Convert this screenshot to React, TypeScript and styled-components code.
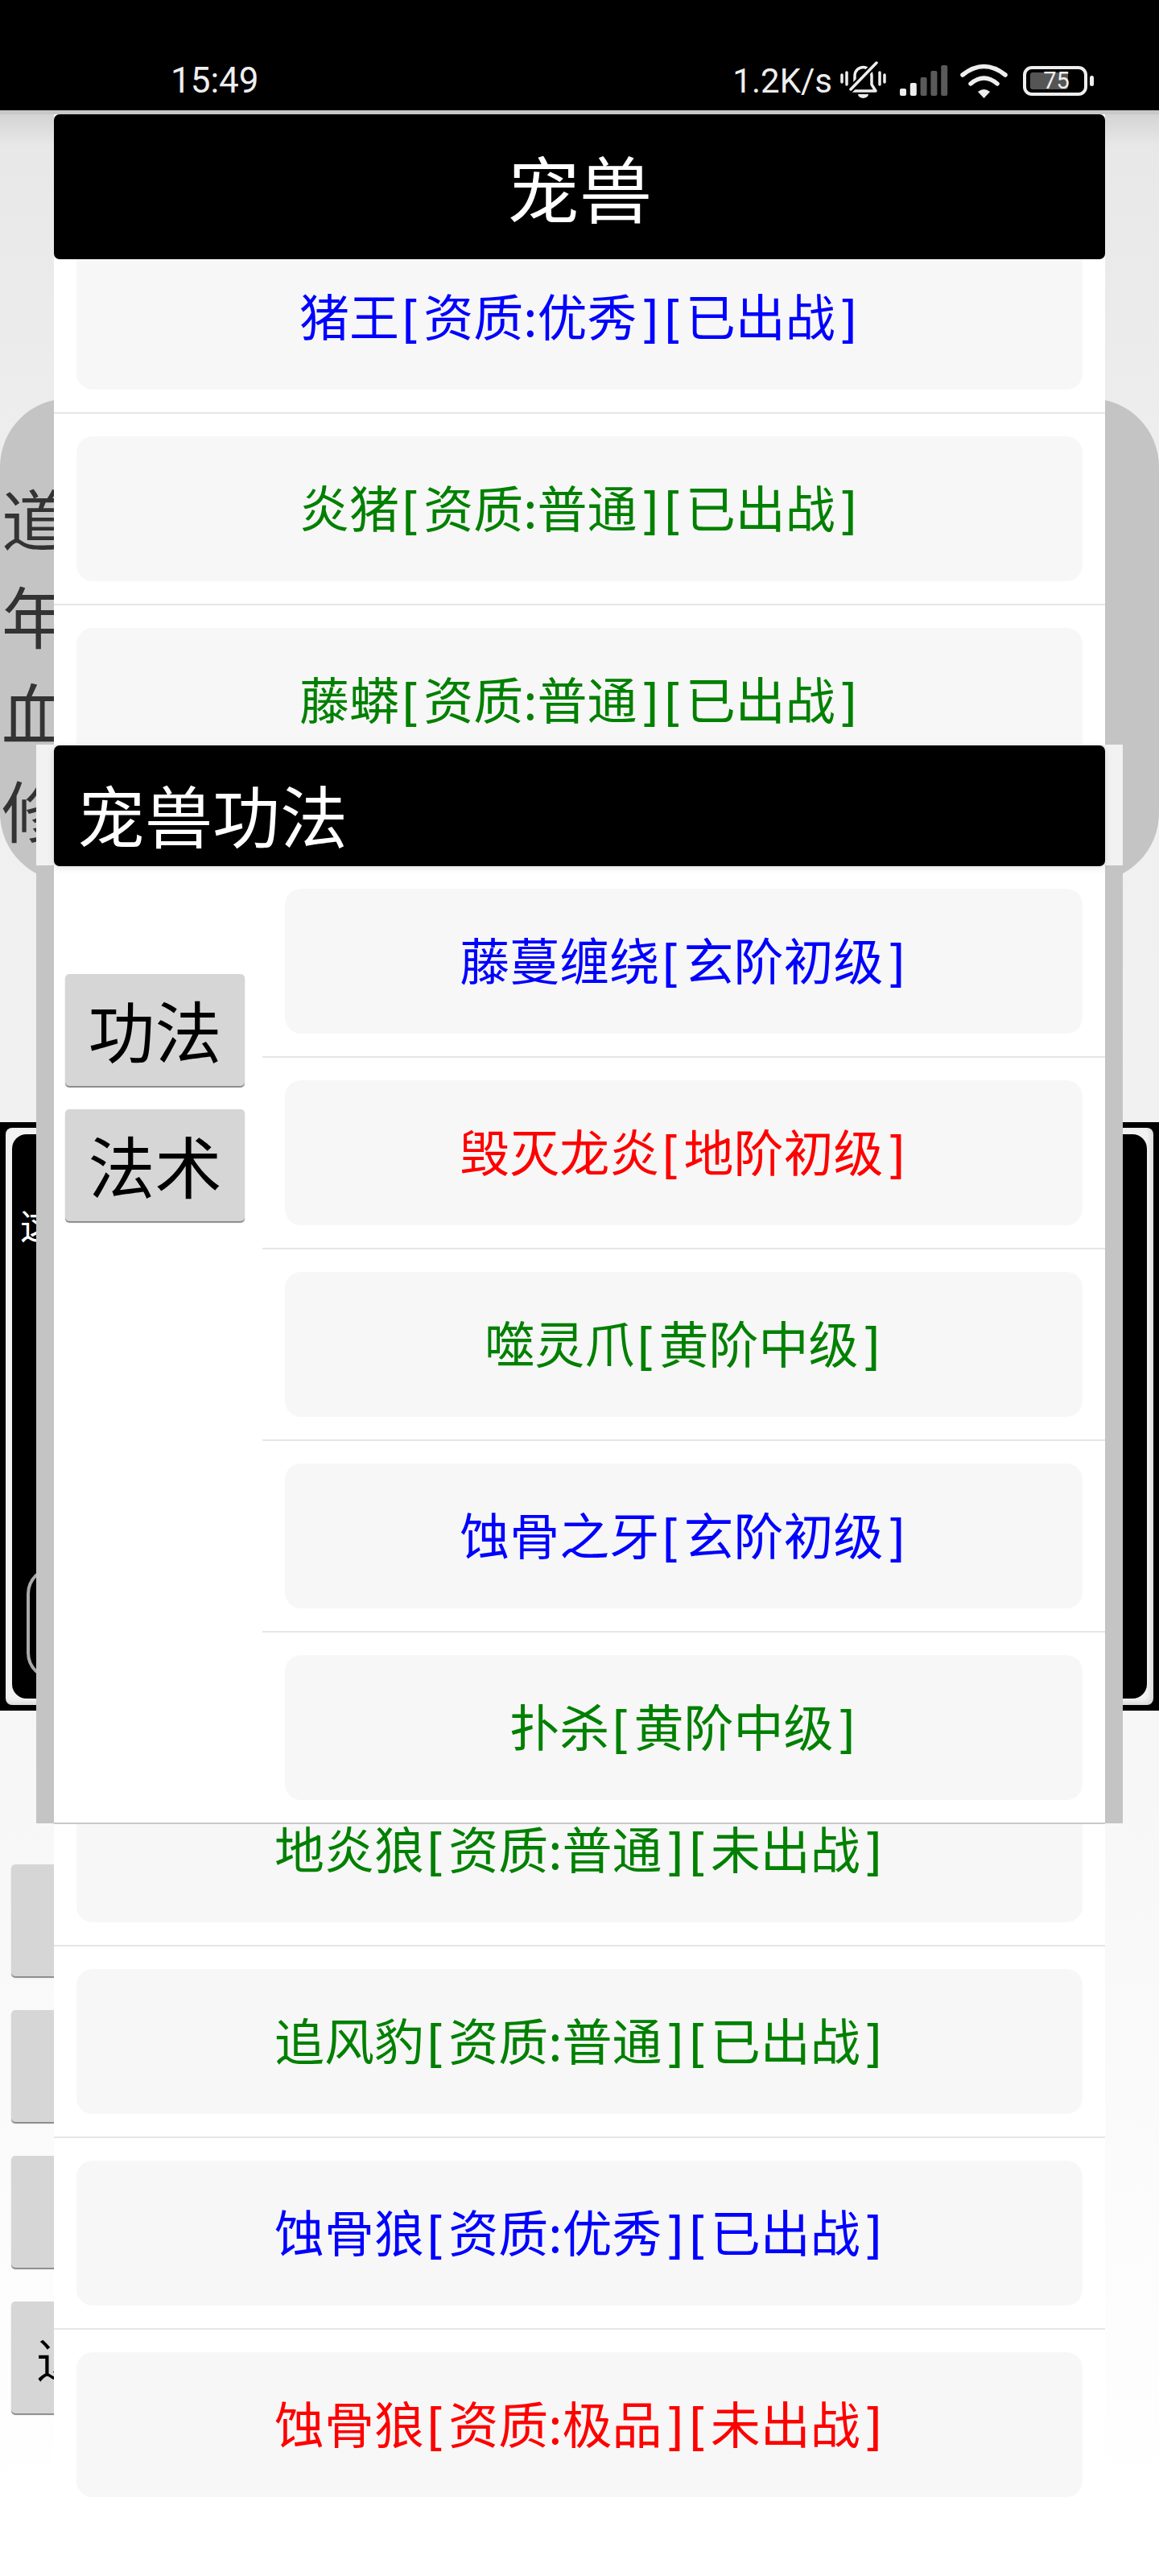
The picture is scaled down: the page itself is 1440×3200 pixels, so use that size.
import styled, { createGlobalStyle } from "styled-components";

type Grade = "blue" | "green" | "red" | "none";

const gradeColor: Record<Grade, string> = {
  blue: "#0000ff",
  green: "#008000",
  red: "#ff0000",
  none: "transparent"
};

const pets: { name: string; grade: Grade }[] = [
  { name: "猪王[资质:优秀][已出战]", grade: "blue" },
  { name: "炎猪[资质:普通][已出战]", grade: "green" },
  { name: "藤蟒[资质:普通][已出战]", grade: "green" },
  // these five sit behind the skill dialog
  { name: "", grade: "none" },
  { name: "", grade: "none" },
  { name: "", grade: "none" },
  { name: "", grade: "none" },
  { name: "", grade: "none" },
  { name: "地炎狼[资质:普通][未出战]", grade: "green" },
  { name: "追风豹[资质:普通][已出战]", grade: "green" },
  { name: "蚀骨狼[资质:优秀][已出战]", grade: "blue" },
  { name: "蚀骨狼[资质:极品][未出战]", grade: "red" }
];

const skills: { name: string; grade: Grade }[] = [
  { name: "藤蔓缠绕[玄阶初级]", grade: "blue" },
  { name: "毁灭龙炎[地阶初级]", grade: "red" },
  { name: "噬灵爪[黄阶中级]", grade: "green" },
  { name: "蚀骨之牙[玄阶初级]", grade: "blue" },
  { name: "扑杀[黄阶中级]", grade: "green" }
];

const GlobalStyle = createGlobalStyle`
  html, body { margin: 0; padding: 0; background: #fff; }
  * { box-sizing: border-box; }
  body { font-family: "Noto Sans CJK SC", sans-serif; }
`;

const Screen = styled.div`
  position: relative;
  width: 1440px;
  height: 3200px;
  overflow: hidden;
  background: #fff;
`;

const StatusBar = styled.div`
  height: 137px;
  background: #000;
  color: #eee;
  display: flex;
  align-items: center;
  justify-content: space-between;
  padding: 63px 89px 0 212px;
  font-family: Roboto, sans-serif;
  font-size: 42px;
`;

const Clock = styled.span`
  font-size: 44px;
`;

const StatusRight = styled.div`
  display: flex;
  align-items: center;
`;

const Speed = styled.span`
  margin-right: 10px;
`;

const Bell = styled.svg`
  margin-right: 17px;
  margin-top: -2px;
`;

const Wifi = styled.svg`
  margin: 0 19px 0 15px;
`;

const Battery = styled.div`
  position: relative;
  width: 80px;
  height: 37px;
  border: 4px solid #eee;
  border-radius: 11px;
  display: flex;
  align-items: center;
  justify-content: center;
  padding-left: 3px;
  font-size: 29px;
  line-height: 1;

  &::before {
    content: "";
    position: absolute;
    left: 5px;
    top: 4px;
    bottom: 4px;
    width: 47px;
    border-radius: 3px;
    background: #555;
  }

  &::after {
    content: "";
    position: absolute;
    right: -12px;
    top: 8px;
    width: 5px;
    height: 13px;
    border-radius: 3px;
    background: #eee;
  }

  span { position: relative; }
`;

const ShadowLine = styled.div`
  height: 5px;
  background: #c8c8c8;
`;

const Page = styled.div`
  height: 3058px;
  background: linear-gradient(to bottom, #d4d4d4 0, #e8e8e8 40px, #efefef 500px, #f1f1f1 1200px, #f8f8f8 2200px, #fff 3000px);
  padding-top: 353px;
`;

const StatsPanel = styled.div`
  height: 600px;
  border-radius: 85px;
  background: #c4c4c4;
  padding: 87px 0 0 2px;
  color: #333;
  font-size: 83px;
  line-height: 120.500px;
`;

const LogPanel = styled.div`
  margin-top: 299px;
  height: 731px;
  background: #000;
  padding: 7px;
`;

const LogFrame = styled.div`
  height: 100%;
  border-radius: 8px;
  background: #f2f2f2;
  padding: 8px;
  box-shadow: inset -3px -3px 6px rgba(0, 0, 0, 0.12);
`;

const LogInner = styled.div`
  height: 100%;
  border-radius: 18px;
  background: #000;
  display: flex;
  flex-direction: column;
  padding: 0 18px 23px;
`;

const LogText = styled.div`
  margin: 86px 0 0 -8px;
  color: #fff;
  font-size: 44px;
  line-height: 1.2;
`;

const LogInput = styled.div`
  margin-top: auto;
  height: 141px;
  width: 1300px;
  border: 4px solid #aaa;
  border-radius: 34px;
`;

const MenuColumn = styled.div`
  margin: 191px 0 0 14px;
  display: flex;
  flex-direction: column;
  gap: 42px;
`;

const MenuButton = styled.div`
  width: 302px;
  height: 139px;
  border-radius: 5px;
  background: #d6d6d6;
  box-shadow: 0 2px 1px #8a8a8a;
  display: flex;
  align-items: center;
  justify-content: center;
  color: #000;
  font-size: 60px;
`;

const PetDialog = styled.div`
  position: absolute;
  left: 67px;
  top: 142px;
  width: 1306px;
  bottom: 0;
  background: #fff;
  display: flex;
  flex-direction: column;
`;

const PetTitle = styled.div`
  position: relative;
  z-index: 1;
  flex: none;
  height: 180px;
  border-radius: 7px;
  background: #000;
  color: #fff;
  font-size: 90px;
  line-height: 1;
  padding-bottom: 2px;
  display: flex;
  align-items: center;
  justify-content: center;
`;

const PetList = styled.div`
  flex: 1;
  overflow: hidden;
  margin-top: -46px;
`;

const Row = styled.div<{ $last?: boolean }>`
  padding: 28px;
  border-bottom: ${(p) => (p.$last ? "none" : "2px solid #e6e6e6")};
`;

const RowCard = styled.div<{ $grade: Grade }>`
  height: 180px;
  border-radius: 20px;
  background: #f7f7f7;
  display: flex;
  align-items: center;
  justify-content: center;
  font-size: 62px;
  line-height: 1;
  white-space: pre;
  color: ${(p) => gradeColor[p.$grade]};
`;

const Bracket = styled.span`
  display: inline-block;
  padding: 0 3px;
  font-family: "DejaVu Sans", sans-serif;
`;

const SkillDialog = styled.div`
  position: absolute;
  left: 45px;
  top: 925px;
  width: 1350px;
  height: 1340px;
  background: #c4c4c4;
  display: flex;
  flex-direction: column;
`;

const SkillTitleStrip = styled.div`
  flex: none;
  height: 150px;
  background: #f2f2f2;
  padding: 1px 22px 0;
`;

const SkillTitle = styled.div`
  height: 150px;
  border-radius: 7px;
  background: #000;
  box-shadow: 0 2px 8px rgba(0, 0, 0, 0.12);
  color: #fff;
  font-size: 84px;
  line-height: 1;
  display: flex;
  align-items: center;
  padding: 20px 0 0 29px;
  position: relative;
`;

const SkillBody = styled.div`
  flex: 1;
  margin: 0 22px;
  background: #fff;
  display: flex;
  border-bottom: 2px solid #c8c8c8;
`;

const SkillTabs = styled.div`
  flex: none;
  width: 259px;
  padding: 135px 0 0 14px;
  display: flex;
  flex-direction: column;
  gap: 29px;
`;

const TabButton = styled.div`
  width: 223px;
  height: 139px;
  border-radius: 5px;
  background: #d6d6d6;
  box-shadow: 0 2px 1px #8a8a8a;
  display: flex;
  align-items: center;
  justify-content: center;
  color: #000;
  font-size: 83px;
  line-height: 1;
  padding-bottom: 3px;
`;

const SkillList = styled.div`
  flex: 1;
  overflow: hidden;
  padding-top: 1px;
`;

function Label({ text }: { text: string }) {
  return (
    <span>
      {text.split(/([\[\]])/).map((part, k) =>
        part === "[" || part === "]" ? <Bracket key={k}>{part}</Bracket> : part
      )}
    </span>
  );
}

function BellOff() {
  return (
    <Bell width="57" height="46" viewBox="0 0 57 46" fill="none" stroke="#eee" strokeWidth="3.500" strokeLinecap="round" strokeLinejoin="round">
      <path d="M2 17v9M8 14v15M49 14v15M55 17v9" />
      <path d="M13 37h31l-5-8V18a10.500 10.500 0 0 0-21 0v11z" />
      <path d="M11 37L46 1" stroke="#000" strokeWidth="8" />
      <path d="M13 35L45 2" />
      <path d="M22 41h13a6.500 5 0 0 1-13 0z" fill="#eee" stroke="none" />
    </Bell>
  );
}

function SignalBars() {
  const heights = [9, 16, 23, 31, 38];
  return (
    <svg width="60" height="38" viewBox="0 0 60 38">
      {heights.map((h, k) => (
        <rect key={k} x={k * 12.8} y={38 - h} width="8" height={h} rx="2" fill={k < 2 ? "#eee" : "#5a5a5a"} />
      ))}
    </svg>
  );
}

function WifiIcon() {
  return (
    <Wifi width="59" height="43" viewBox="0 0 59 43" fill="none" stroke="#eee" strokeWidth="5.500" strokeLinecap="round">
      <path d="M3 14Q29.500 -7 56 14" />
      <path d="M13 25Q29.500 11 46 25" />
      <path d="M22 35L29.500 43L37 35Q29.500 29 22 35Z" fill="#eee" stroke="none" />
    </Wifi>
  );
}

export default function App() {
  return (
    <Screen>
      <GlobalStyle />
      <StatusBar>
        <Clock>15:49</Clock>
        <StatusRight>
          <Speed>1.2K/s</Speed>
          <BellOff />
          <SignalBars />
          <WifiIcon />
          <Battery><span>75</span></Battery>
        </StatusRight>
      </StatusBar>
      <ShadowLine />
      <Page>
        <StatsPanel>
          <div>道号</div>
          <div>年龄</div>
          <div>血量</div>
          <div>修为</div>
        </StatsPanel>
        <LogPanel>
          <LogFrame>
            <LogInner>
              <LogText>这</LogText>
              <LogInput />
            </LogInner>
          </LogFrame>
        </LogPanel>
        <MenuColumn>
          <MenuButton />
          <MenuButton />
          <MenuButton />
          <MenuButton>退出游戏</MenuButton>
        </MenuColumn>
      </Page>

      <PetDialog>
        <PetTitle>宠兽</PetTitle>
        <PetList>
          {pets.map((pet, k) => (
            <Row key={k} $last={k === pets.length - 1}>
              <RowCard $grade={pet.grade}><Label text={pet.name} /></RowCard>
            </Row>
          ))}
        </PetList>
      </PetDialog>

      <SkillDialog>
        <SkillTitleStrip>
          <SkillTitle>宠兽功法</SkillTitle>
        </SkillTitleStrip>
        <SkillBody>
          <SkillTabs>
            <TabButton>功法</TabButton>
            <TabButton>法术</TabButton>
          </SkillTabs>
          <SkillList>
            {skills.map((skill, k) => (
              <Row key={k} $last={k === skills.length - 1}>
                <RowCard $grade={skill.grade}><Label text={skill.name} /></RowCard>
              </Row>
            ))}
          </SkillList>
        </SkillBody>
      </SkillDialog>
    </Screen>
  );
}
